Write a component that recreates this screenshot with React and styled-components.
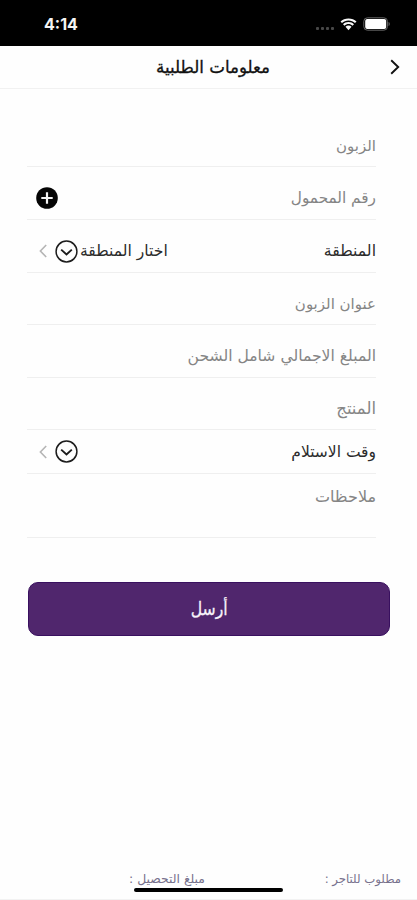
import React from 'react';
import styled, { createGlobalStyle } from 'styled-components';

const GlobalStyle = createGlobalStyle`
  * {
    box-sizing: border-box;
  }

  body {
    margin: 0;
    background-color: #fefefe;
    font-family: 'DejaVu Sans', sans-serif;
  }
`;

const Screen = styled.div`
  display: flex;
  flex-direction: column;
  height: 900px;
  overflow: hidden;
  background-color: #fefefe;
`;

const StatusBar = styled.div`
  display: flex;
  justify-content: space-between;
  align-items: center;
  height: 46px;
  padding: 2px 26px 0 44px;
  background-color: #000;
`;

const Time = styled.span`
  font-family: Inter, sans-serif;
  font-size: 16px;
  font-weight: 700;
  color: #f4f4f4;
`;

const StatusIcons = styled.div`
  display: flex;
  align-items: center;
  gap: 6px;
`;

const Signal = styled.div`
  display: flex;
  gap: 2px;
  padding-top: 8px;
`;

const SignalDot = styled.span`
  width: 3px;
  height: 3px;
  border-radius: 1px;
  background-color: #484848;
`;

const NavBar = styled.header`
  display: grid;
  grid-template-columns: 43px 1fr 17px;
  align-items: center;
  height: 43px;
  padding: 0 17px 0 0;
  border-bottom: 1px solid #f1f1f1;
`;

const Title = styled.h1`
  margin: 0;
  text-align: center;
  white-space: nowrap;
  font-size: 16.7px;
  font-weight: 400;
  line-height: 20px;
  color: #111;
  -webkit-text-stroke: 0.3px #111;
`;

const BackButton = styled.div`
  display: flex;
  justify-content: flex-end;
`;

const Form = styled.form`
  display: flex;
  flex-direction: column;
  margin: 37px 41px 0 27px;
`;

const Field = styled.div`
  display: flex;
  justify-content: space-between;
  align-items: ${({ $top }) => ($top ? 'flex-start' : 'center')};
  height: ${({ $height }) => $height}px;
  padding-top: ${({ $height, $top }) => $top || ($height > 50 ? 10 : 0)}px;
  border-bottom: 1px solid #efefef;
`;

const Label = styled.span`
  font-size: ${({ $size }) => $size || 15}px;
  line-height: 20px;
  white-space: nowrap;
  color: ${({ $dark }) => ($dark ? '#2b2b2b' : '#858585')};
`;

const Picker = styled.div`
  display: flex;
  align-items: center;
  direction: ltr;
  padding-left: 12px;
`;

const AddButton = styled.div`
  display: flex;
  margin-left: 9px;
`;

const SubmitButton = styled.button`
  height: 54px;
  margin: 44px 27px 0 28px;
  padding: 0;
  border: 1px solid #39105f;
  border-radius: 10px;
  background-color: #50266d;
  color: #f7f2fa;
  font-family: inherit;
  font-size: 18px;
  line-height: 20px;
`;

const SubmitText = styled.span`
  display: inline-block;
  transform: scaleX(0.87);
  -webkit-text-stroke: 0.3px #f7f2fa;
`;

const Footer = styled.footer`
  position: relative;
  display: flex;
  margin-top: auto;
  height: 32px;
  padding: 1px 16px 0 0;
  border-bottom: 1px solid #f2f2f2;
`;

const Total = styled.span`
  width: 196px;
  font-size: ${({ $size }) => $size}px;
  line-height: 20px;
  white-space: nowrap;
  color: #77718c;
`;

const HomeIndicator = styled.div`
  position: absolute;
  left: 134px;
  top: 20px;
  width: 149px;
  height: 4px;
  border-radius: 2px;
  background-color: #000;
`;

const WifiIcon = () => (
  <svg width="17" height="13" viewBox="0 0 17 13" fill="#f8f8f8">
    <path d="M8.5 0.4C5.3 0.4 2.5 1.6 0.5 3.6L2 5.1C3.7 3.5 5.9 2.6 8.5 2.6S13.3 3.5 15 5.1L16.5 3.6C14.5 1.6 11.7 0.4 8.5 0.4Z" />
    <path d="M8.5 4C6.3 4 4.4 4.8 3 6.2L4.5 7.7C5.6 6.7 7 6.1 8.5 6.1S11.4 6.7 12.5 7.7L14 6.2C12.6 4.8 10.7 4 8.5 4Z" />
    <path d="M8.5 7.6C7.3 7.6 6.3 8 5.5 8.8L8.5 12.2L11.5 8.8C10.7 8 9.7 7.6 8.5 7.6Z" />
  </svg>
);

const BatteryIcon = () => (
  <svg width="28" height="14" viewBox="0 0 28 14">
    <rect x="0.8" y="0.8" width="23.6" height="12.4" rx="3.6" fill="none" stroke="#666" />
    <rect x="2.2" y="2" width="21" height="10" rx="2" fill="#fff" />
    <path d="M25.6 5V9C27 8.6 27 5.4 25.6 5Z" fill="#777" />
  </svg>
);

const BackIcon = () => (
  <svg width="10" height="16" viewBox="0 0 10 16" fill="none" stroke="#111" strokeWidth="1.9">
    <path d="M1.2 1.2L8.2 8L1.2 14.8" />
  </svg>
);

const ChevronIcon = () => (
  <svg width="8" height="14" viewBox="0 0 8 14" fill="none" stroke="#b5b5b5" strokeWidth="1.6">
    <path d="M7.2 1L1.4 7L7.2 13" />
  </svg>
);

const DropIcon = styled.svg`
  margin: 0 2px 0 8px;
`;

const DropdownIcon = () => (
  <DropIcon width="23" height="23" viewBox="0 0 23 23" fill="none" stroke="#1c1c1c">
    <circle cx="11.5" cy="11.5" r="10.4" strokeWidth="1.5" />
    <path d="M6.2 9.6L11.5 14.4L16.8 9.6" strokeWidth="1.9" />
  </DropIcon>
);

const PlusIcon = () => (
  <svg width="22" height="22" viewBox="0 0 22 22">
    <circle cx="11" cy="11" r="10.8" fill="#050505" />
    <path d="M11 5.3V16.7M5.3 11H16.7" stroke="#f4f4f4" strokeWidth="2.2" />
  </svg>
);

const SelectPicker = ({ value }) => (
  <Picker>
    <ChevronIcon />
    <DropdownIcon />
    {value && <Label $dark $size={15.6}>{value}</Label>}
  </Picker>
);

const App = () => {
  return (
    <>
      <GlobalStyle />
      <Screen>
        <StatusBar>
          <Time>4:14</Time>
          <StatusIcons>
            <Signal>
              <SignalDot />
              <SignalDot />
              <SignalDot />
              <SignalDot />
            </Signal>
            <WifiIcon />
            <BatteryIcon />
          </StatusIcons>
        </StatusBar>
        <NavBar>
          <span />
          <Title>معلومات الطلبية</Title>
          <BackButton>
            <BackIcon />
          </BackButton>
        </NavBar>
        <Form dir="rtl">
          <Field $height={41}>
            <Label>الزبون</Label>
          </Field>
          <Field $height={53}>
            <Label $size={15.3}>رقم المحمول</Label>
            <AddButton>
              <PlusIcon />
            </AddButton>
          </Field>
          <Field $height={53}>
            <Label $dark $size={15.7}>المنطقة</Label>
            <SelectPicker value="اختار المنطقة" />
          </Field>
          <Field $height={52}>
            <Label>عنوان الزبون</Label>
          </Field>
          <Field $height={53}>
            <Label $size={15.6}>المبلغ الاجمالي شامل الشحن</Label>
          </Field>
          <Field $height={52}>
            <Label $size={16.5}>المنتج</Label>
          </Field>
          <Field $height={44}>
            <Label $dark $size={15.5}>وقت الاستلام</Label>
            <SelectPicker />
          </Field>
          <Field $height={64} $top={13}>
            <Label $size={16}>ملاحظات</Label>
          </Field>
        </Form>
        <SubmitButton type="button">
          <SubmitText>أرسل</SubmitText>
        </SubmitButton>
        <Footer dir="rtl">
          <Total $size={11.7}>مطلوب للتاجر :</Total>
          <Total $size={12.4}>مبلغ التحصيل :</Total>
          <HomeIndicator />
        </Footer>
      </Screen>
    </>
  );
};

export default App;
